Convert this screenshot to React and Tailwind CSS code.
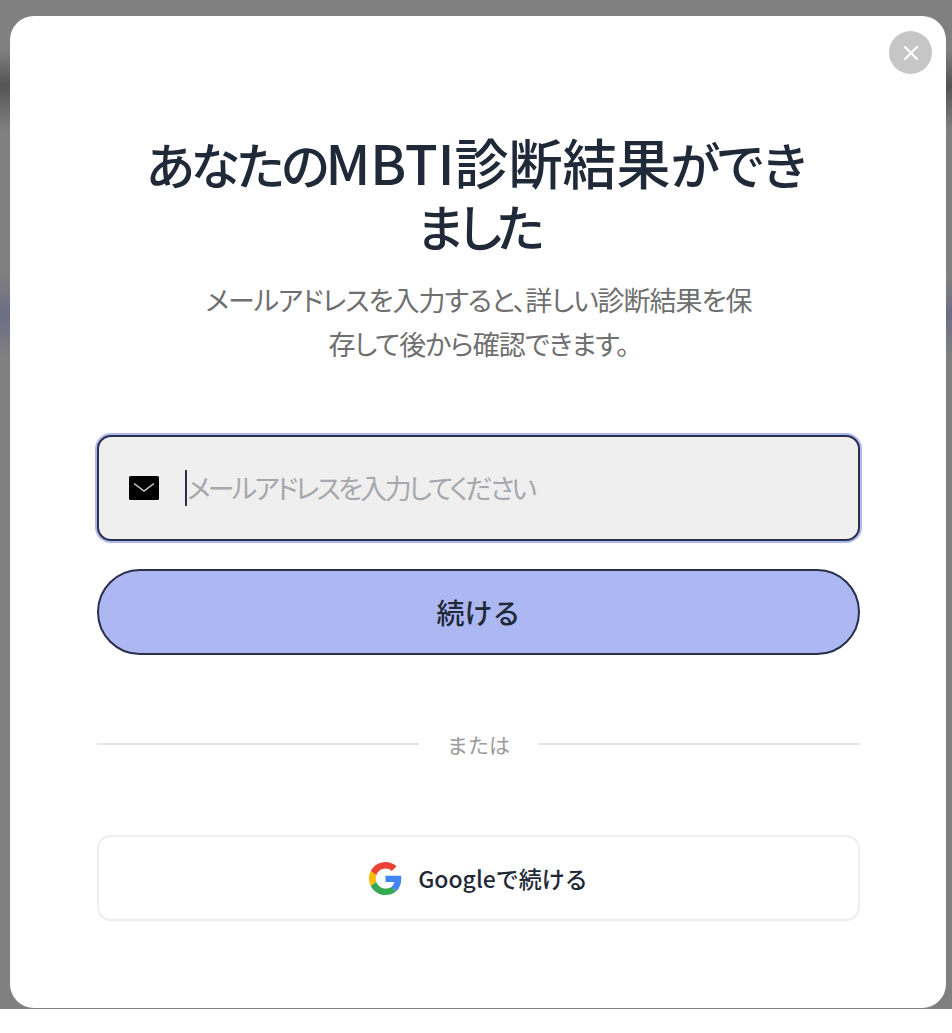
import React from 'react';
import { X } from 'lucide-react';

const jpFont = { fontFamily: '"Noto Sans CJK JP", "Liberation Sans", sans-serif' };

const GoogleIcon = () => (
    <svg viewBox="0 0 48 48" className="w-[33px] h-[33px]">
        <path fill="#EA4335" d="M24 9.5c3.54 0 6.71 1.22 9.21 3.6l6.85-6.85C35.9 2.38 30.47 0 24 0 14.62 0 6.51 5.38 2.56 13.22l7.98 6.19C12.43 13.72 17.74 9.5 24 9.5z" />
        <path fill="#4285F4" d="M46.98 24.55c0-1.57-.15-3.09-.38-4.55H24v9.02h12.94c-.58 2.96-2.26 5.48-4.78 7.18l7.73 6c4.51-4.18 7.09-10.36 7.09-17.65z" />
        <path fill="#FBBC05" d="M10.53 28.59c-.48-1.45-.76-2.99-.76-4.59s.27-3.14.76-4.59l-7.98-6.19C.92 16.46 0 20.12 0 24c0 3.88.92 7.54 2.56 10.78l7.97-6.19z" />
        <path fill="#34A853" d="M24 48c6.48 0 11.93-2.13 15.89-5.81l-7.73-6c-2.15 1.45-4.92 2.3-8.16 2.3-6.26 0-11.57-4.22-13.47-9.91l-7.98 6.19C6.51 42.62 14.62 48 24 48z" />
    </svg>
);

const MailIcon = () => (
    <svg viewBox="0 0 30 24" className="w-[30px] h-[24px]">
        <rect width="30" height="24" rx="1.5" fill="#000000" />
        <path d="M5 7.500l10 7.500 10-7.500" fill="none" stroke="#cfcfcf" strokeWidth="1.4" />
    </svg>
);

export default function App() {
    return (
        <div className="min-h-[1033px] bg-white" style={jpFont}>
            <div className="h-[1009px] pt-[16px] pl-[10px] pr-[6px] pb-px bg-[linear-gradient(180deg,#808080_0px,#808080_50px,#545454_85px,#808080_130px,#808080_275px,#6c6e86_315px,#808080_355px,#808080_100%)]">
                <div className="relative h-[992px] rounded-[24px] bg-white pl-[87px] pr-[86px] pt-[115px]">
                    <button className="absolute top-[15px] right-[14px] w-[43px] h-[43px] rounded-full bg-[#c6c6c6] flex items-center justify-center text-white">
                        <X className="w-[24px] h-[24px]" strokeWidth={2.25} />
                    </button>

                    {/* Heading */}
                    <h1 className="mx-auto w-[680px] pr-[6px] text-center text-[54px] leading-[62px] font-medium text-[#1f2937]">
                        <span className="text-[50px] leading-none tracking-[-5px]">あなたの</span>MBTI診断結果<span className="text-[50px] leading-none tracking-[-5px]">ができ</span><span className="text-[50px] leading-none tracking-[-10px]">ました</span>
                    </h1>
                    <p className="mx-auto mt-[23px] w-[560px] text-center text-[27px] leading-[44px] tracking-[-1px] text-[#6f6f6f] [font-feature-settings:'palt']">
                        メールアドレスを入力すると、詳しい診断結果を保存して後から確認できます。
                    </p>

                    {/* Email */}
                    <div className="mt-[69px] h-[106px] rounded-[14px] border-2 border-[#2a2f4a] bg-[#efefef] ring-2 ring-[#adb8f3] flex items-center pl-[30px]">
                        <MailIcon />
                        <span className="ml-[26px] w-[2px] h-[36px] bg-[#2a2f4a]" />
                        <span className="text-[27px] tracking-[-2.7px] text-[#a6a8ad] [font-feature-settings:'palt']">メールアドレスを入力してください</span>
                    </div>

                    <button className="mt-[28px] w-full h-[86px] rounded-full border-2 border-[#2a2f4a] bg-[#adb8f3] text-[28px] font-medium text-[#1f2937]">
                        続ける
                    </button>

                    {/* Divider */}
                    <div className="mt-[68px] flex items-center gap-[28px]">
                        <div className="flex-1 h-[2px] bg-[#e5e5e5]" />
                        <span className="text-[21px] leading-[42px] text-[#9a9a9a]">または</span>
                        <div className="flex-1 h-[2px] bg-[#e5e5e5]" />
                    </div>

                    <button className="mt-[70px] w-full h-[86px] rounded-[14px] border-2 border-[#eeeeee] bg-white flex items-center justify-center gap-[16px] text-[23px] font-medium text-[#1f2937]">
                        <GoogleIcon />
                        Googleで続ける
                    </button>
                </div>
            </div>
        </div>
    );
}
